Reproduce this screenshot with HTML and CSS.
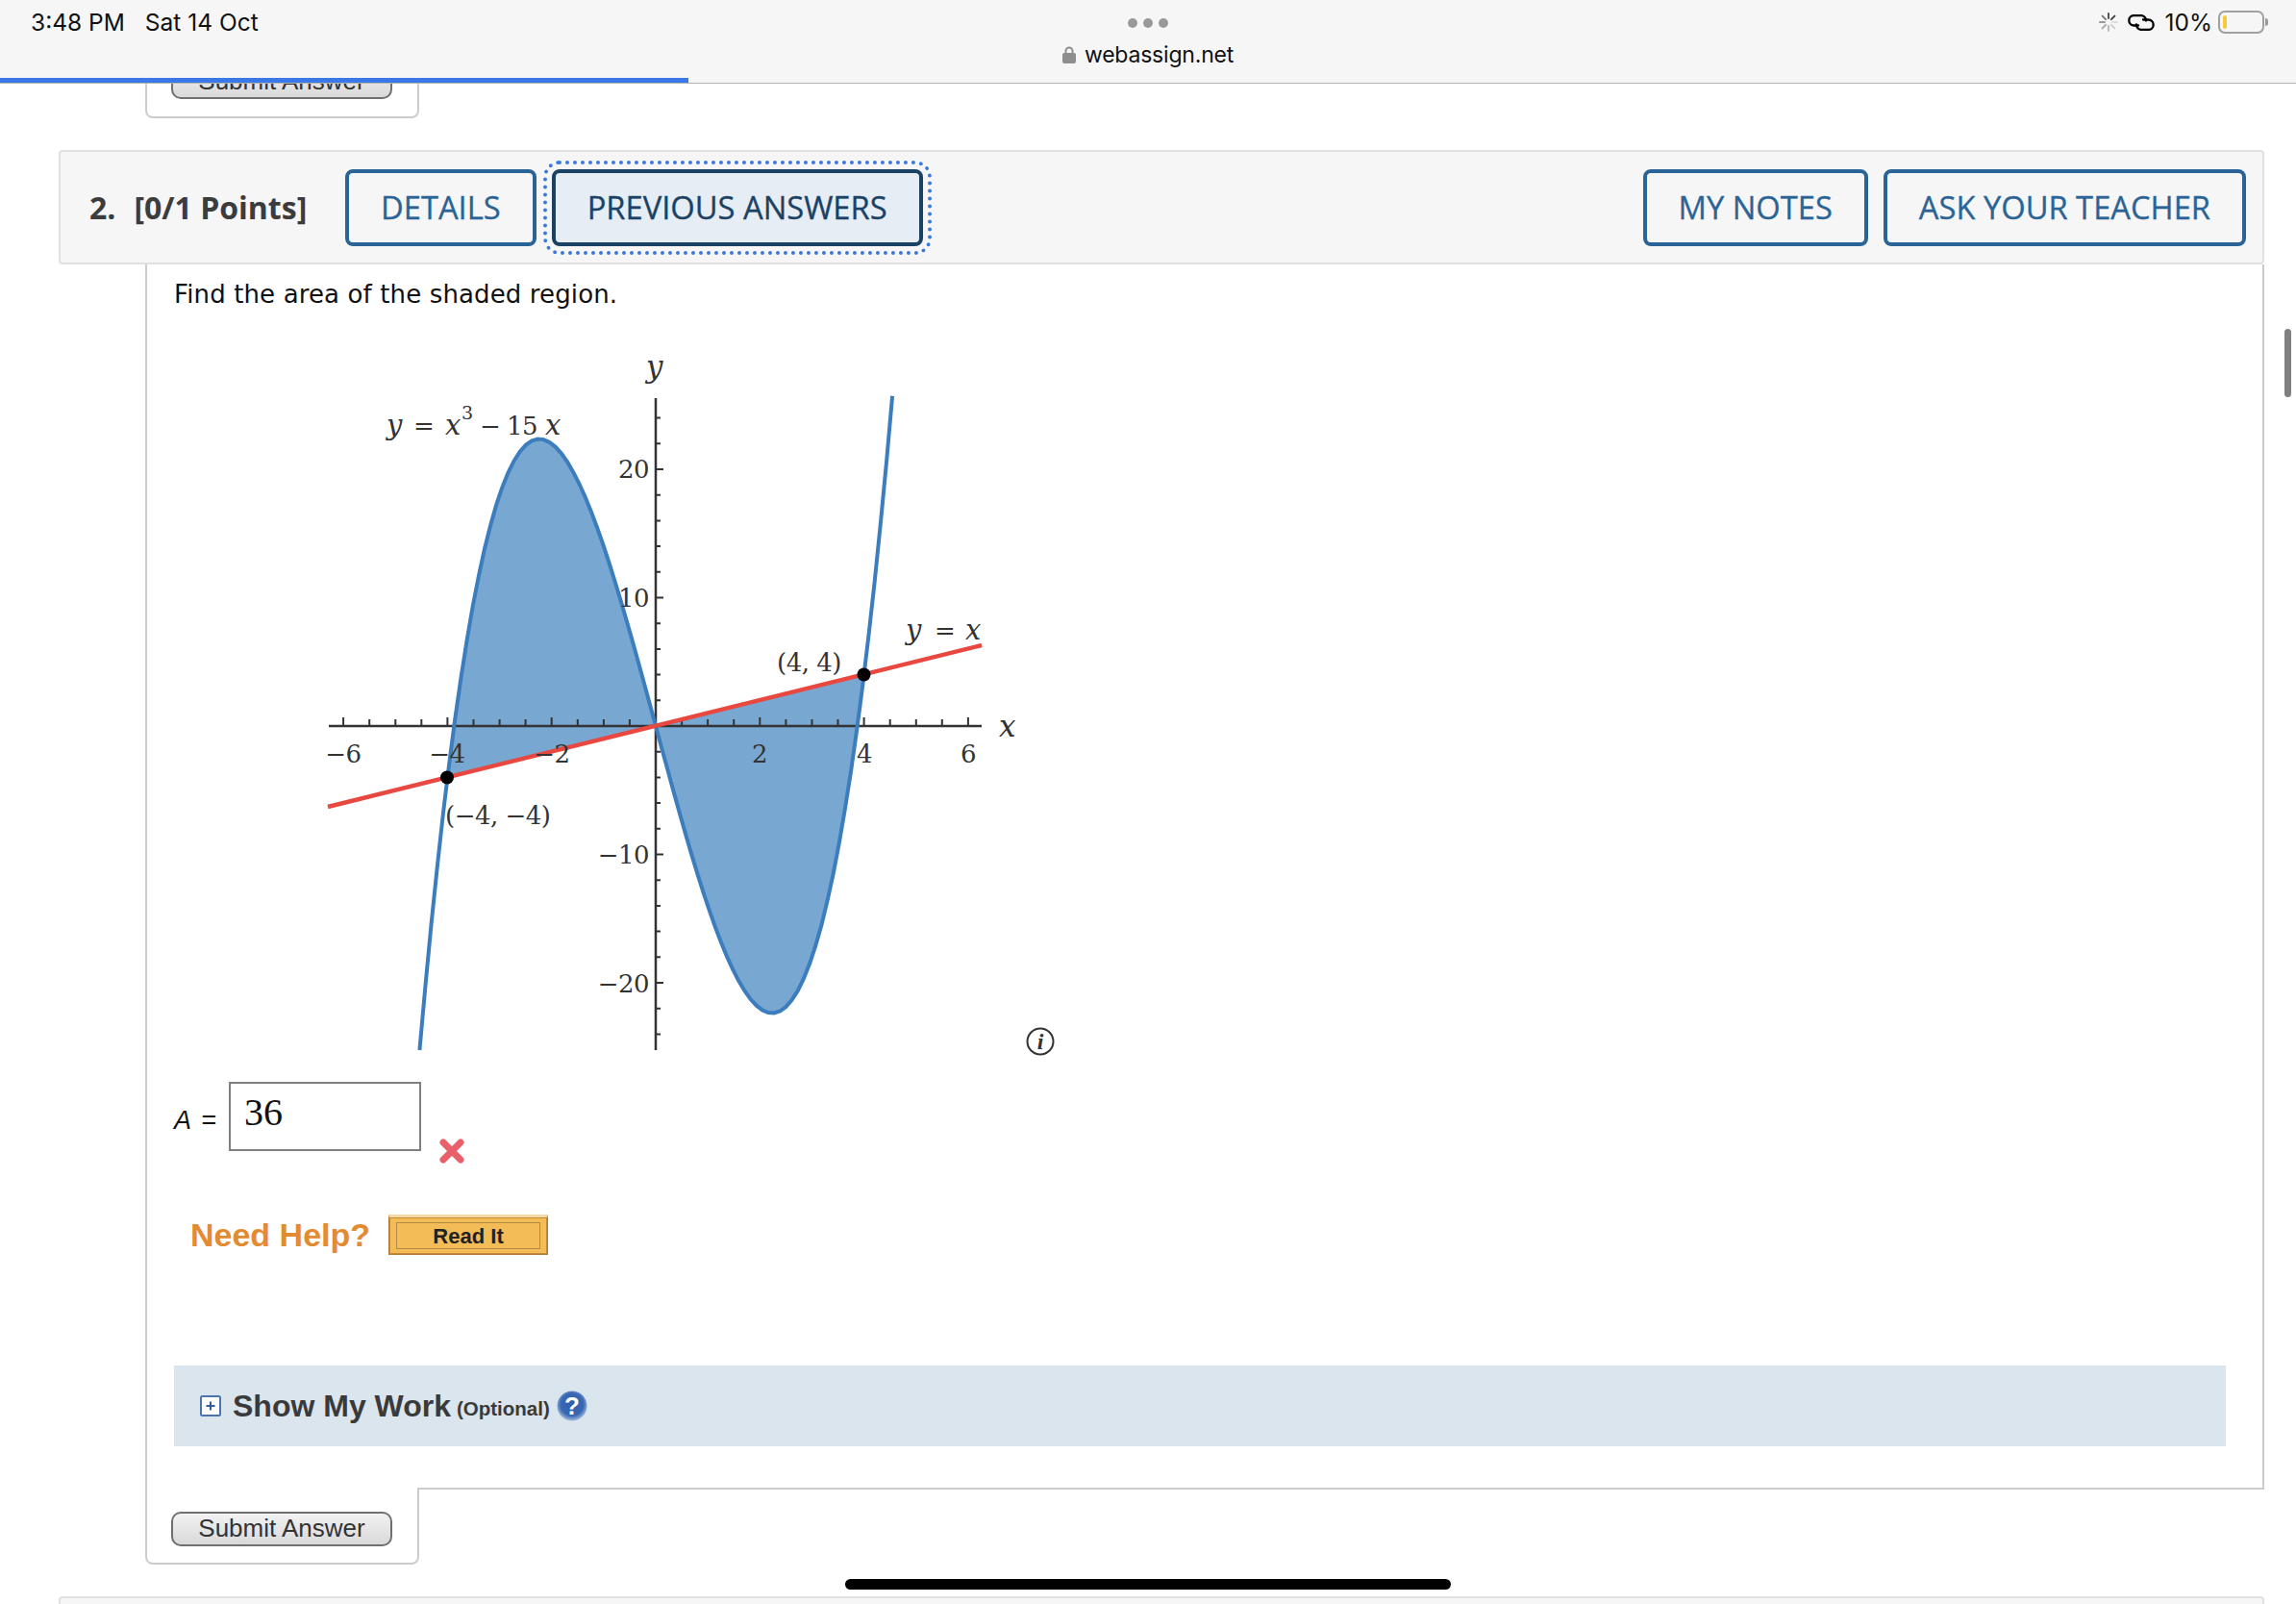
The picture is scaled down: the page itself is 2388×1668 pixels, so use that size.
FILE: index.html
```html
<!DOCTYPE html>
<html lang="en">
<head>
    <meta charset="UTF-8">
    <meta name="viewport" content="width=device-width, initial-scale=1.0">
    <title>WebAssign</title>
    <link rel="stylesheet" href="styles.css">
</head>
<body>

<!-- Barra de estado y dirección del navegador -->
<header class="browser-bar">
    <div class="status-left"><span>3:48 PM</span><span>Sat 14 Oct</span></div>
    <div class="address">
        <div class="dots"><i></i><i></i><i></i></div>
        <div class="url">
            <svg class="lock" viewBox="0 0 14 18" width="14" height="18"><path d="M3.500 8V5a3.500 3.500 0 0 1 7 0V8" fill="none" stroke="#8e8e8e" stroke-width="2"/><rect x="0" y="7" width="14" height="11" rx="2" fill="#8e8e8e"/></svg>
            <span>webassign.net</span>
        </div>
    </div>
    <div class="status-right">
        <svg class="spinner" viewBox="0 0 20 20" width="20" height="20">
            <g stroke-width="2" stroke-linecap="round">
                <path d="M10 1v5" stroke="#555"/><path d="M16.400 3.600l-3.500 3.500" stroke="#444"/><path d="M19 10h-5" stroke="#ddd"/><path d="M16.400 16.400l-3.500-3.500" stroke="#ccc"/>
                <path d="M10 19v-5" stroke="#bbb"/><path d="M3.600 16.400l3.500-3.500" stroke="#aaa"/><path d="M1 10h5" stroke="#999"/><path d="M3.600 3.600l3.500 3.500" stroke="#777"/>
            </g>
        </svg>
        <svg class="link" viewBox="0 0 28 17" width="28" height="17"><g fill="none" stroke="#000" stroke-width="2.300" stroke-linecap="round"><path d="M11 11.500H6.500a5.200 5.200 0 0 1 0-10.400H14a5.200 5.200 0 0 1 5 5.400"/><path d="M16 5.500h5.500a5.200 5.200 0 0 1 0 10.400H14a5.200 5.200 0 0 1-5-5.400"/></g></svg>
        <span>10%</span>
        <div class="battery"><div class="battery-level"></div></div>
        <div class="battery-tip"></div>
    </div>
    <div class="progress"></div>
</header>

<main class="page">
    <!-- Resto de la pregunta anterior -->
    <div class="prev-tab">
        <button class="submit-btn">Submit Answer</button>
    </div>

    <!-- Cabecera de la pregunta -->
    <section class="question-head">
        <div class="points"><b>2.</b><b>[0/1 Points]</b></div>
        <button class="head-btn">DETAILS</button>
        <button class="head-btn active">PREVIOUS ANSWERS</button>
        <div class="head-spacer"></div>
        <button class="head-btn">MY NOTES</button>
        <button class="head-btn">ASK YOUR TEACHER</button>
    </section>

    <section class="question-body">
        <p class="prompt">Find the area of the shaded region.</p>

        <div class="figure">
            <svg class="graph" viewBox="0 0 752 780" width="752" height="780">
                <path id="shade" class="shade" d=""/>
                <g id="ticks" class="ticks"></g>
                <path class="axis" d="M22 436H701M362 95V773"/>
                <path id="curve" class="curve" d=""/>
                <path class="line" d="M21 520L701 352"/>
                <circle cx="145" cy="489.500" r="7"/>
                <circle cx="578.500" cy="382.500" r="7"/>

                <g class="labels">
                    <text class="var" x="352" y="73">y</text>
                    <text class="var" x="719" y="447">x</text>

                    <text class="it" x="82" y="133">y</text>
                    <text x="110" y="133">=</text>
                    <text class="it" x="143" y="133">x</text>
                    <text class="sup" x="160" y="117">3</text>
                    <text x="179" y="133">−</text>
                    <text x="207" y="133">15</text>
                    <text class="it" x="247" y="133">x</text>

                    <text class="it" x="622" y="346">y</text>
                    <text x="652" y="346">=</text>
                    <text class="it" x="684" y="346">x</text>

                    <text x="488" y="379">(4, 4)</text>
                    <text x="143" y="538">(−4, −4)</text>

                    <text class="end" x="355" y="178">20</text>
                    <text class="end" x="355" y="312">10</text>
                    <text class="end" x="355" y="579">−10</text>
                    <text class="end" x="355" y="713">−20</text>
                    <text class="mid" x="37" y="474">−6</text>
                    <text class="mid" x="145" y="474">−4</text>
                    <text class="mid" x="254" y="474">−2</text>
                    <text class="mid" x="470" y="474">2</text>
                    <text class="mid" x="579" y="474">4</text>
                    <text class="mid" x="687" y="474">6</text>
                </g>
            </svg>
            <svg class="info" viewBox="0 0 30 30" width="30" height="30">
                <circle cx="15" cy="15" r="13.500" fill="none" stroke="#333" stroke-width="2"/>
                <text x="15" y="23" text-anchor="middle">i</text>
            </svg>
        </div>

        <div class="answer">
            <span class="answer-label"><i>A</i> =</span>
            <div class="answer-box">36</div>
            <svg class="wrong" viewBox="0 0 28 28" width="28" height="28"><path d="M5 5L23 23M23 5L5 23" stroke="#e8606a" stroke-width="7" stroke-linecap="round"/></svg>
        </div>

        <div class="help">
            <span class="need-help">Need Help?</span>
            <button class="read-it"><span>Read It</span></button>
        </div>

        <div class="work">
            <svg class="plus" viewBox="0 0 22 22" width="22" height="22"><rect x="1" y="1" width="20" height="20" rx="1.500" fill="#fff" stroke="#4a76ad" stroke-width="2"/><path d="M6.500 11h9M11 6.500v9" stroke="#2f5f9e" stroke-width="2"/></svg>
            <span class="work-title">Show My Work</span>
            <span class="work-opt">(Optional)</span>
            <svg class="help-icon" viewBox="0 0 32 32" width="32" height="32">
                <defs><radialGradient id="q" cx="50%" cy="45%" r="55%"><stop offset="0%" stop-color="#2f5ca8"/><stop offset="70%" stop-color="#3a69b4"/><stop offset="100%" stop-color="#a5bddf"/></radialGradient></defs>
                <circle cx="16" cy="16" r="15.500" fill="url(#q)"/>
                <text x="16" y="25" text-anchor="middle">?</text>
            </svg>
        </div>
    </section>

    <!-- Pestaña inferior con el botón -->
    <div class="submit-tab">
        <button class="submit-btn">Submit Answer</button>
    </div>

    <div class="next-head"></div>
</main>

<div class="scroll-thumb"></div>
<div class="home-bar"></div>

<script>
    // Escalas del gráfico: origen en (362, 436)
    const ox = 362, oy = 436, ux = 54.15, uy = 13.35;
    const px = x => (ox + x * ux).toFixed(1);
    const py = y => (oy - y * uy).toFixed(1);
    const f = x => x * x * x - 15 * x;

    function puntos(a, b) {
        let d = [];
        for (let i = 0; i <= 80; i++) {
            const x = a + (b - a) * i / 80;
            d.push(px(x) + ' ' + py(f(x)));
        }
        return d;
    }

    // Curva completa y zona sombreada entre la curva y la recta y = x
    document.getElementById('curve').setAttribute('d', 'M' + puntos(-4.535, 4.545).join('L'));
    const zona = 'M' + puntos(-4, 0).join('L') + 'Z' + 'M' + puntos(0, 4).join('L') + 'Z';
    document.getElementById('shade').setAttribute('d', zona);

    // Marcas de los ejes
    let marcas = '';
    for (let i = -12; i <= 12; i++) {
        if (i === 0) continue;
        const alto = i % 4 === 0 ? 9 : 7;
        marcas += `M${px(i / 2)} ${oy}v-${alto}`;
    }
    for (let j = -12; j <= 12; j++) {
        if (j === 0) continue;
        const largo = j % 5 === 0 ? 8 : 5;
        marcas += `M${ox} ${py(j * 2)}h${largo}`;
    }
    document.getElementById('ticks').innerHTML = `<path d="${marcas}"/>`;
</script>

</body>
</html>
```

FILE: styles.css
```css
/* Estilos generales */
html, body {
    margin: 0;
    padding: 0;
    height: 100%;
    overflow: hidden;
    background-color: #fff;
}

body {
    font-family: "Liberation Sans", Arial, sans-serif;
    color: #333;
}

button {
    font-family: inherit;
    margin: 0;
    padding: 0;
}

/* Barra del navegador */
.browser-bar {
    position: absolute;
    top: 0;
    left: 0;
    right: 0;
    z-index: 5;
    height: 86px;
    background-color: #f6f6f6;
    border-bottom: 1px solid #b4b4b4;
    display: flex;
    justify-content: space-between;
    font-family: Inter, "Liberation Sans", sans-serif;
    font-size: 24.500px;
    color: #111;
}

.status-left {
    display: flex;
    gap: 21px;
    padding: 8px 0 0 32px;
    width: 500px;
    box-sizing: border-box;
}

.address {
    display: flex;
    flex-direction: column;
    align-items: center;
    padding-top: 19px;
}

.dots {
    display: flex;
    gap: 6px;
    height: 10px;
}

.dots i {
    display: block;
    width: 10px;
    height: 10px;
    border-radius: 50%;
    background-color: #999;
}

.url {
    display: flex;
    align-items: center;
    gap: 9px;
    margin-top: 14px;
    font-size: 23px;
    letter-spacing: -0.2px;
}

.status-right {
    display: flex;
    align-items: flex-start;
    justify-content: flex-end;
    gap: 8px;
    padding: 8px 32px 0 0;
    width: 500px;
    box-sizing: border-box;
}

.spinner {
    margin: 5px 2px 0 0;
}

.link {
    margin: 7px 3px 0 0;
}

.battery {
    width: 48px;
    height: 24px;
    margin: 3px 0 0 -2px;
    border: 2px solid #a0a0a0;
    border-radius: 7px;
    box-sizing: border-box;
    padding: 3px;
}

.battery-level {
    width: 4px;
    height: 100%;
    background-color: #f7ca3b;
    border-radius: 2px;
}

.battery-tip {
    width: 3px;
    height: 8px;
    margin: 11px -3px 0 -7px;
    background-color: #999;
    border-radius: 0 3px 3px 0;
}

.progress {
    position: absolute;
    left: 0;
    bottom: 0;
    width: 716px;
    height: 5px;
    background-color: #3a78e8;
}

/* Contenido de la página */
.page {
    padding: 0 33px 0 61px;
    display: flex;
    flex-direction: column;
}

.submit-btn {
    width: 230px;
    height: 36px;
    padding-bottom: 2px;
    border: 2px solid #707070;
    border-radius: 10px;
    background: linear-gradient(#f2f2f2, #d9d9d9);
    font-size: 26px;
    color: #333;
}

.prev-tab {
    width: 256px;
    height: 54px;
    margin-left: 90px;
    margin-top: 19px;
    padding: 48px 0 0 25px;
    border: 2px solid #ccc;
    border-top: none;
    border-radius: 0 0 8px 8px;
}

/* Cabecera de la pregunta */
.question-head {
    display: flex;
    align-items: center;
    gap: 16px;
    height: 119px;
    margin-top: 33px;
    padding: 0 17px 0 30px;
    background-color: #f6f6f6;
    border: 2px solid #e0e0e0;
    border-radius: 4px;
    box-sizing: border-box;
}

.points {
    display: flex;
    gap: 19px;
    width: 250px;
    font-family: "Open Sans", sans-serif;
    font-size: 32px;
    color: #3c3c3c;
}

.head-btn {
    height: 80px;
    padding: 0 33px;
    font-family: "Open Sans", sans-serif;
    font-size: 32.700px;
    -webkit-text-stroke: 0.3px currentColor;
    color: #2a6496;
    background-color: #f6f6f6;
    border: 4px solid #2a6496;
    border-radius: 8px;
}

.head-btn.active {
    color: #1b4265;
    background-color: #e6edf4;
    border-color: #1b4265;
    outline: 4px dotted #3a78e0;
    outline-offset: 5px;
}

.head-spacer {
    flex: 1;
}

/* Cuerpo de la pregunta */
.question-body {
    margin-left: 90px;
    padding: 0 38px 42px 28px;
    border-right: 2px solid #ccc;
    border-left: 2px solid #ccc;
    height: 1272px;
    box-sizing: border-box;
}

.prompt {
    margin: 0;
    padding-top: 15px;
    font-family: "DejaVu Sans", sans-serif;
    font-size: 26px;
    line-height: 32px;
    letter-spacing: 0.13px;
    color: #111;
}

.figure {
    display: flex;
    align-items: flex-start;
    height: 806px;
    margin: -3px 0 0 139px;
}

.graph {
    flex: none;
}

.ticks path {
    fill: none;
    stroke: #333;
    stroke-width: 2;
}

.axis {
    fill: none;
    stroke: #333;
    stroke-width: 2.500;
}

.shade {
    fill: #78a7d2;
}

.curve {
    fill: none;
    stroke: #3b7dbd;
    stroke-width: 4;
}

.line {
    fill: none;
    stroke: #e8483f;
    stroke-width: 4.500;
}

.labels text {
    font-family: "DejaVu Serif", serif;
    font-size: 26px;
    letter-spacing: -0.5px;
    fill: #333;
}

.labels .sup {
    font-size: 19px;
}

.labels .var {
    font-size: 31px;
    font-style: italic;
}

.labels .it {
    font-size: 29px;
    font-style: italic;
}

.labels .end {
    text-anchor: end;
}

.labels .mid {
    text-anchor: middle;
}

.info {
    margin: 749px 0 0 -5px;
}

.info text {
    font-family: "Liberation Serif", serif;
    font-style: italic;
    font-weight: bold;
    font-size: 24px;
    fill: #333;
}

/* Respuesta */
.answer {
    display: flex;
    align-items: flex-start;
}

.answer-label {
    margin-top: 25px;
    width: 57px;
    font-size: 27px;
    word-spacing: 3px;
    color: #111;
}

.answer-box {
    width: 200px;
    height: 72px;
    padding: 6px 0 0 14px;
    border: 2px solid #808080;
    box-sizing: border-box;
    font-family: "Liberation Serif", serif;
    font-size: 40px;
    color: #111;
}

.wrong {
    margin: 58px 0 0 18px;
}

.help {
    display: flex;
    align-items: center;
    gap: 19px;
    margin-top: 52px;
    padding-left: 17px;
}

.need-help {
    font-size: 34px;
    font-weight: bold;
    color: #e38b32;
}

.read-it {
    width: 166px;
    height: 42px;
    padding: 5px 7px;
    background-color: #f3bc57;
    border: 1px solid #b47c33;
    border-top: 3px solid #f5d9a5;
    box-shadow: inset 0 0 0 1px #c48a3a;
    font-size: 22px;
    font-weight: bold;
    color: #222;
}

.read-it span {
    display: block;
    height: 100%;
    line-height: 27px;
    border: 1px solid #b08a45;
    box-sizing: border-box;
}

/* Show My Work */
.work {
    display: flex;
    align-items: center;
    height: 84px;
    margin-top: 115px;
    padding-left: 27px;
    background-color: #dbe5ee;
}

.plus {
    margin-right: 12px;
}

.work-title {
    font-size: 32px;
    font-weight: bold;
    color: #3a3a3a;
}

.work-opt {
    margin: 6px 7px 0 6px;
    font-size: 20.500px;
    font-weight: bold;
    color: #3a3a3a;
}

.help-icon text {
    font-family: "Liberation Sans", sans-serif;
    font-size: 26px;
    font-weight: bold;
    fill: #fff;
}

/* Pestaña inferior */
.submit-tab {
    position: relative;
    margin-left: 90px;
    width: 285px;
    height: 80px;
    padding: 25px 0 0 25px;
    box-sizing: border-box;
    background-color: #fff;
    border: 2px solid #ccc;
    border-top: none;
    border-radius: 0 0 8px 8px;
}

.submit-tab::after {
    content: "";
    position: absolute;
    top: 0;
    left: 283px;
    width: 1919px;
    height: 2px;
    background-color: #ccc;
}

.next-head {
    height: 60px;
    margin-top: 33px;
    background-color: #f6f6f6;
    border: 2px solid #e0e0e0;
    border-radius: 4px;
}

/* Elementos del sistema */
.scroll-thumb {
    position: absolute;
    top: 342px;
    right: 5px;
    width: 7px;
    height: 71px;
    border-radius: 4px;
    background-color: #808080;
}

.home-bar {
    position: absolute;
    left: 879px;
    bottom: 15px;
    width: 630px;
    height: 11px;
    border-radius: 6px;
    background-color: #000;
}
```
